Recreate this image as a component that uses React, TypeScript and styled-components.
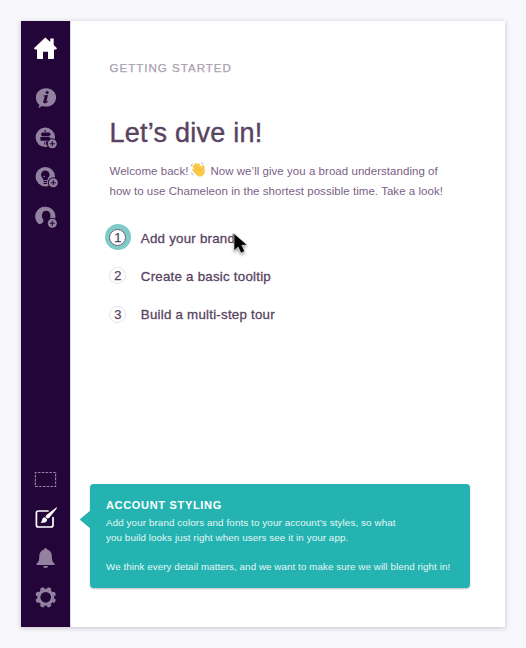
import React from "react";
import styled, { createGlobalStyle } from "styled-components";

const GlobalStyle = createGlobalStyle`
  * { box-sizing: border-box; }
  body { margin: 0; background: #f8f7fb; font-family: "Liberation Sans", Arial, sans-serif; }
  h1, h2, h3, p, ol { margin: 0; padding: 0; }
`;

const Page = styled.div`
  width: 526px;
  height: 648px;
  padding: 21px;
  overflow: hidden;
`;

const Window = styled.div`
  display: flex;
  width: 484px;
  height: 606px;
  background: #fff;
  box-shadow: 0 1px 5px rgba(40, 30, 50, 0.24);
`;

const Sidebar = styled.nav`
  display: flex;
  flex-direction: column;
  justify-content: space-between;
  width: 49px;
  padding: 13px 0 15px 10px;
  background: #240539;
  box-shadow: 1px 0 0 #ddd8e1;
`;

const IconGroup = styled.div<{ $gap: number }>`
  display: flex;
  flex-direction: column;
  gap: ${(p) => p.$gap}px;
`;

const Icon = styled.svg<{ $active?: boolean; $after?: number }>`
  display: block;
  width: 29px;
  height: 28px;
  margin-bottom: ${(p) => p.$after ?? 0}px;
  color: ${(p) => (p.$active ? "#ffffff" : "#93829f")};
  overflow: visible;
`;

const Main = styled.main`
  display: flex;
  flex-direction: column;
  flex: 1;
  padding: 39px 0 0 39.5px;
`;

const Eyebrow = styled.h2`
  height: 16px;
  font-size: 11.5px;
  line-height: 16px;
  font-weight: 400;
  letter-spacing: 1.03px;
  color: #aaa0b0;
  -webkit-text-stroke: 0.25px #aaa0b0;
  white-space: nowrap;
`;

const Title = styled.h1`
  margin-top: 40px;
  height: 34px;
  font-size: 27px;
  line-height: 34px;
  font-weight: 400;
  letter-spacing: 0.25px;
  color: #594362;
  -webkit-text-stroke: 0.4px #594362;
  white-space: nowrap;
`;

const Intro = styled.p`
  margin-top: 11px;
  color: #7a5f87;
`;

const IntroLine = styled.span`
  display: block;
  height: 20px;
  font-size: 11.5px;
  line-height: 20px;
  letter-spacing: 0.04px;
  white-space: nowrap;
`;

const Wave = styled.svg`
  display: inline-block;
  width: 16px;
  height: 15px;
  margin: -4px 1px 0 -1.5px;
  vertical-align: middle;
`;

const Steps = styled.ol`
  display: flex;
  flex-direction: column;
  gap: 12.4px;
  margin-top: 23.3px;
  margin-left: -4.7px;
  list-style: none;
`;

const Step = styled.li`
  display: flex;
  align-items: center;
  height: 26px;
`;

const Halo = styled.span<{ $active?: boolean }>`
  display: flex;
  align-items: center;
  justify-content: center;
  width: 26px;
  height: 26px;
  border-radius: 50%;
  background: ${(p) => (p.$active ? "#80cbc8" : "transparent")};
`;

const StepNumber = styled.span<{ $active?: boolean }>`
  width: 17px;
  height: 17px;
  border: 1px solid ${(p) => (p.$active ? "#6a6480" : "#e6e2e9")};
  border-radius: 50%;
  background: #fff;
  font-size: 13px;
  line-height: 16px;
  text-align: center;
  color: #594362;
  -webkit-text-stroke: 0.25px #594362;
`;

const StepLabel = styled.span`
  margin-left: 10px;
  font-size: 13.3px;
  line-height: 18px;
  letter-spacing: 0.24px;
  color: #594362;
  -webkit-text-stroke: 0.3px #594362;
  white-space: nowrap;
`;

const LabelSlot = styled.span<{ $drop?: number }>`
  position: relative;
  padding-top: ${(p) => p.$drop ?? 0}px;
`;

const Pointer = styled.svg`
  position: absolute;
  left: 103.3px;
  top: 6.5px;
  width: 19px;
  height: 25.3px;
  overflow: visible;
  filter: drop-shadow(0 2px 1.5px rgba(0, 0, 0, 0.38));
`;

const Tooltip = styled.section`
  position: relative;
  width: 380px;
  height: 104px;
  margin: auto 0 39px -20px;
  padding: 12.5px 0 0 16.5px;
  border-radius: 4px;
  background: #24b3b0;
  box-shadow: 0 1px 2px rgba(0, 0, 0, 0.25);
  color: #fff;
`;

const Arrow = styled.svg`
  position: absolute;
  left: -10px;
  top: 26px;
  width: 11px;
  height: 19px;
`;

const TooltipTitle = styled.h3`
  height: 16px;
  font-size: 11px;
  line-height: 16px;
  font-weight: 700;
  letter-spacing: 0.68px;
  white-space: nowrap;
`;

const TooltipLine = styled.p<{ $spacing: number; $before?: number }>`
  margin-top: ${(p) => p.$before ?? 0}px;
  height: 15px;
  font-size: 9.8px;
  line-height: 15px;
  letter-spacing: ${(p) => p.$spacing}px;
  color: #e4f7f6;
  white-space: nowrap;
`;

const BG = "#240539";

const PlusBadge = ({ x, y }: { x: number; y: number }) => (
  <g>
    <circle cx={x} cy={y} r="5.5" fill={BG} />
    <circle cx={x} cy={y} r="4.5" fill="currentColor" />
    <path d={`M${x - 2.6} ${y}h5.2M${x} ${y - 2.6}v5.2`} stroke={BG} strokeWidth="1.1" />
  </g>
);

const HomeIcon = () => (
  <Icon $active $after={22} viewBox="0 0 29 28">
    <path
      fill="currentColor"
      d="M14.3 3.5 19.3 8V4.4h3.4V11l3.3 3.2-1 1.4h-2V24.2q0 .8-.8.8H17v-7.2h-5V25H6.8q-.8 0-.8-.8v-8.6H4L2.9 14.2z"
    />
  </Icon>
);

const InfoIcon = () => (
  <Icon viewBox="0 0 29 28">
    <path
      fill="currentColor"
      d="M15 4.2c5.7 0 10.1 4.1 10.1 9.2s-4.4 9.2-10.1 9.2c-1.4 0-2.6-.2-3.8-.6-1 .9-2.4 1.5-4 1.6.8-.8 1.2-1.7 1.2-2.8-2.2-1.8-3.5-4.4-3.5-7.4 0-5.1 4.400-9.200 10.100-9.200z"
    />
    <circle cx="16.2" cy="8.6" r="1.5" fill={BG} />
    <path
      fill={BG}
      d="M12.4 11.5 17 11l-1.600 6.200c-.2.7.2.7 1.200-.4l.5.4c-1 1.500-2.100 2.100-3.200 2.100-1.400 0-1.800-.9-1.500-2.100l1.200-4.400c.1-.5-.1-.6-1.300-.6z"
    />
  </Icon>
);

const SignIcon = () => (
  <Icon viewBox="0 0 29 28">
    <circle cx="14.3" cy="13.3" r="9.7" fill="currentColor" />
    <path
      fill={BG}
      d="M13.6 6.2h1.4v1.6h-1.4zM11.2 8.5h7.5v.9h.9v1.700h-.9v1.100h-7.500l-1.400-1.700zM9.400 13h9.200v.8h.9v2.200h-.9v.8H9.400zM13.400 17.600h.8v3.200h-.8zM15 17.600h1v3.200h-1z"
    />
    <PlusBadge x={21.3} y={19.7} />
  </Icon>
);

const BulbIcon = () => (
  <Icon $after={1} viewBox="0 0 29 28">
    <circle cx="14.3" cy="13.7" r="9.7" fill="currentColor" />
    <path
      fill={BG}
      d="M14.300 7.500a4.300 4.300 0 0 1 4.300 4.300c0 2.200-1.800 2.900-2.300 5.400h-4c-.5-2.500-2.300-3.200-2.300-5.400a4.300 4.300 0 0 1 4.300-4.300zM12.600 18h3.400v.9h-3.400zM12.600 19.700h3.400v1.200h-3.400z"
    />
    <circle cx="13.2" cy="13.500" r=".75" fill="currentColor" />
    <PlusBadge x={22.3} y={19.7} />
  </Icon>
);

const HeadIcon = () => (
  <Icon viewBox="0 0 29 28">
    <path
      fill="currentColor"
      d="M14.700 2.700a9.700 9.700 0 0 1 9.700 9.700c0 4-2 7-4.400 8.400L18 18.800v-3c1-1 1.500-2.500 1.500-4.300 0-3-1.900-4.700-4.300-4.700s-4.300 1.700-4.300 4.700c0 1.900.6 3.400 1.600 4.400-.1 1.600-.7 2.900-1.900 3.600L8.100 20.200A9.700 9.700 0 0 1 14.700 2.700z"
    />
    <PlusBadge x={21.3} y={19.3} />
  </Icon>
);

const MarqueeIcon = () => (
  <Icon viewBox="0 -2 29 28">
    <rect x="4.4" y="6.5" width="20.2" height="14" fill="none" stroke="currentColor" strokeWidth="1.2" strokeDasharray="2.6 1.2" strokeDashoffset="1.3" />
  </Icon>
);

const BrushIcon = () => (
  <Icon $active viewBox="0 0 29 28">
    <path
      d="M17 7H7.400Q5.400 7 5.400 9V21q0 2 2 2H20q2 0 2-2V13.600"
      fill="none"
      stroke="currentColor"
      strokeWidth="1.7"
      strokeLinecap="round"
    />
    <path
      fill="currentColor"
      d="M25.600 3.200c.6.500.3 1-.1 1.600l-7 8.600c-.7.900-1.500 1.200-2.200 1.100l-1.700-1.600c0-.8.400-1.500 1.200-2.100zM13.900 13.300l2.100 1.900c.5 2.900-2.600 4.500-6.600 3.200 1.400-.6 1.400-1.600 1.800-3 .4-1.400 1.500-2.100 2.700-2.100z"
    />
  </Icon>
);

const BellIcon = () => (
  <Icon viewBox="0 0 29 28">
    <path
      fill="currentColor"
      d="M14.600 4.200c1 0 1.500.5 1.600 1.300 3.200.8 4.700 3.400 4.700 6.800 0 4.300.7 6.100 2.700 7.300v1.300H5.600v-1.300c2-1.200 2.700-3 2.700-7.300 0-3.400 1.500-6 4.700-6.800.1-.8.600-1.300 1.600-1.300zM12.100 21.900h5c-.3 1.300-1.200 2-2.500 2s-2.200-.7-2.500-2z"
    />
  </Icon>
);

const GearIcon = () => (
  <Icon viewBox="0 0 29 28">
    <g transform="translate(14.7 13.3)">
      <circle r="6.9" fill="none" stroke="currentColor" strokeWidth="3.1" />
      {[22.5, 67.5, 112.5, 157.5, 202.5, 247.5, 292.5, 337.5].map((a) => (
        <path key={a} transform={`rotate(${a})`} d="M-2.300-7.800-1.800-10.200Q0-10.700 1.800-10.200L2.300-7.800z" fill="currentColor" />
      ))}
    </g>
  </Icon>
);

const WaveIcon = () => (
  <Wave viewBox="0 0 15 15">
    <path
      d="M4 7 2.500 4.400q-.5-1.200.3-1.500t1.500.6L6 6 4.300 2.700q-.3-1.100.5-1.400t1.400.6L8.500 5.500 7 2.600q-.2-1 .5-1.200t1.200.5l2.500 4.200.3-2q.4-1.200 1.300-.9t.8 1.400l.3 4.300q.4 3.400-2.200 4.800-3.600 1.700-6-1.300L2.300 8.600q-.6-1 .1-1.500t1.600.4z"
      fill="#fac945"
      stroke="#fac945"
      strokeWidth=".6"
    />
    <path d="m4.300 5 3 4.200M6 3.600l3.300 4.600M3.600 8.600l2.600 2.700M11.400 6.200q-1.700 1-1.300 3" fill="none" stroke="#e9a03c" strokeWidth=".45" />
    <path d="M.7 4.500q0-2 1.500-3.200M1 10.500q.5 2 2.300 2.800M10.500.9q1.500 0 2.300 1.200" fill="none" stroke="#8fa8b5" strokeWidth=".8" />
  </Wave>
);

const PointerIcon = () => (
  <Pointer viewBox="0 0 18 24">
    <path d="M0 .5v16.300l3.900-3.500 2.700 5.700 3.500-1.700-2.700-5.600 5.100-.4z" fill="#000" stroke="#fff" strokeWidth=".5" />
  </Pointer>
);

export default function App() {
  return (
    <>
      <GlobalStyle />
      <Page>
        <Window>
          <Sidebar>
            <IconGroup $gap={0}>
              <HomeIcon />
              <IconGroup $gap={11.7}>
                <InfoIcon />
                <SignIcon />
                <BulbIcon />
                <HeadIcon />
              </IconGroup>
            </IconGroup>
            <IconGroup $gap={12}>
              <MarqueeIcon />
              <BrushIcon />
              <BellIcon />
              <GearIcon />
            </IconGroup>
          </Sidebar>
          <Main>
            <Eyebrow>GETTING STARTED</Eyebrow>
            <Title>Let’s dive in!</Title>
            <Intro>
              <IntroLine>
                Welcome back! <WaveIcon /> Now we’ll give you a broad understanding of
              </IntroLine>
              <IntroLine>how to use Chameleon in the shortest possible time. Take a look!</IntroLine>
            </Intro>
            <Steps>
              <Step>
                <Halo $active>
                  <StepNumber $active>1</StepNumber>
                </Halo>
                <LabelSlot $drop={2.5}>
                  <StepLabel>Add your brand</StepLabel>
                  <PointerIcon />
                </LabelSlot>
              </Step>
              <Step>
                <Halo>
                  <StepNumber>2</StepNumber>
                </Halo>
                <LabelSlot $drop={2}>
                  <StepLabel>Create a basic tooltip</StepLabel>
                </LabelSlot>
              </Step>
              <Step>
                <Halo>
                  <StepNumber>3</StepNumber>
                </Halo>
                <LabelSlot>
                  <StepLabel>Build a multi-step tour</StepLabel>
                </LabelSlot>
              </Step>
            </Steps>
            <Tooltip>
              <Arrow viewBox="0 0 11 19">
                <path d="M11 0v19L.7 10.6Q-.4 9.500.7 8.400z" fill="#24b3b0" />
              </Arrow>
              <TooltipTitle>ACCOUNT STYLING</TooltipTitle>
              <TooltipLine $spacing={0.11} $before={2}>
                Add your brand colors and fonts to your account’s styles, so what
              </TooltipLine>
              <TooltipLine $spacing={0.085}>you build looks just right when users see it in your app.</TooltipLine>
              <TooltipLine $spacing={0.065} $before={14}>
                We think every detail matters, and we want to make sure we will blend right in!
              </TooltipLine>
            </Tooltip>
          </Main>
        </Window>
      </Page>
    </>
  );
}
